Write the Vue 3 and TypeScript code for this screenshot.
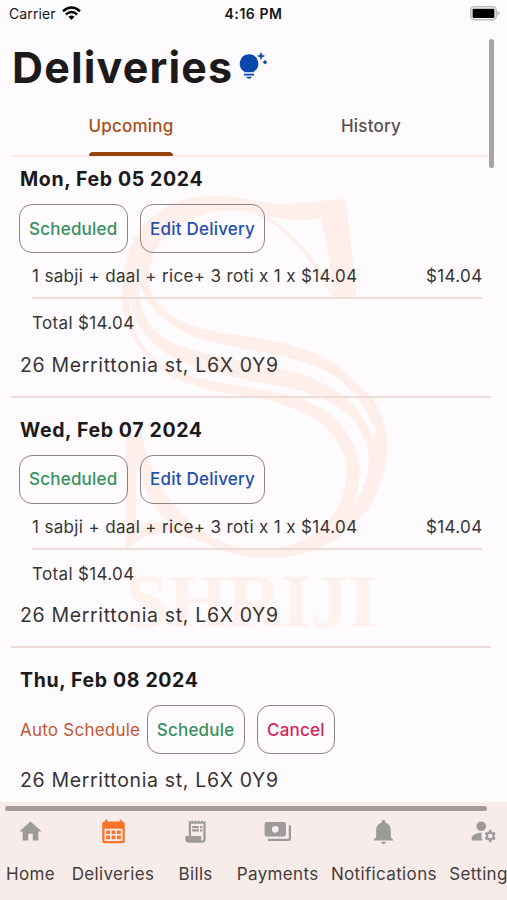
<script setup lang="ts">
interface Action {
  label: string
  tone: 'green' | 'blue' | 'red'
}
interface Delivery {
  date: string
  auto?: boolean
  actions: Action[]
  item?: string
  price?: string
  address: string
}
interface NavItem {
  label: string
  icon: string
  active?: boolean
}

const address = '26 Merrittonia st, L6X 0Y9'
const booked: Action[] = [
  { label: 'Scheduled', tone: 'green' },
  { label: 'Edit Delivery', tone: 'blue' },
]
const item = '1 sabji + daal + rice+ 3 roti x 1 x $14.04'

const deliveries: Delivery[] = [
  { date: 'Mon, Feb 05 2024', actions: booked, item, price: '$14.04', address },
  { date: 'Wed, Feb 07 2024', actions: booked, item, price: '$14.04', address },
  {
    date: 'Thu, Feb 08 2024',
    auto: true,
    actions: [
      { label: 'Schedule', tone: 'green' },
      { label: 'Cancel', tone: 'red' },
    ],
    address,
  },
]

const nav: NavItem[] = [
  { label: 'Home', icon: 'M10 20V14H14V20H19V12H22L12 3L2 12H5V20H10Z' },
  {
    label: 'Deliveries',
    active: true,
    icon: 'M4.500 1.500H6.500V3H17.500V1.500H19.500V3H20A2 2 0 0 1 22 5V20.500A2 2 0 0 1 20 22.500H4A2 2 0 0 1 2 20.500V5A2 2 0 0 1 4 3H4.500ZM4 9.500V20.500H20V9.500ZM5.500 11H8.900V14.200H5.500ZM10.300 11H13.700V14.200H10.300ZM15.100 11H18.500V14.200H15.100ZM5.500 15.600H8.900V18.800H5.500ZM10.300 15.600H13.700V18.800H10.300ZM15.100 15.600H18.500V18.800H15.100Z',
  },
  {
    label: 'Bills',
    icon: 'M19.500 3.500L18 2L16.500 3.500L15 2L13.500 3.500L12 2L10.500 3.500L9 2L7.500 3.500L6 2V16H3V19C3 20.660 4.340 22 6 22H18C19.660 22 21 20.660 21 19V2ZM19 19C19 19.550 18.550 20 18 20S17 19.550 17 19V16H8V5H19ZM9 7H15V9H9ZM16 7H18V9H16ZM9 10H15V12H9ZM16 10H18V12H16Z',
  },
  {
    label: 'Payments',
    icon: 'M2.500 3.500H17.500A2 2 0 0 1 19.500 5.500V14.500A2 2 0 0 1 17.500 16.500H2.500A2 2 0 0 1 .5 14.500V5.500A2 2 0 0 1 2.500 3.500ZM10 7A3 3 0 1 0 10 13A3 3 0 0 0 10 7ZM22 6.500H24V18.500A2 2 0 0 1 22 20.500H3.500V18.500H22Z',
  },
  {
    label: 'Notifications',
    icon: 'M20.500 19V20H3.500V19L5.500 17V11C5.500 7.900 7.030 5.170 10.300 4.290V3.500A1.700 1.700 0 0 1 13.700 3.500V4.290C16.970 5.170 18.500 7.900 18.500 11V17L20.500 19ZM14 21A2 2 0 0 1 10 21Z',
  },
  {
    label: 'Settings',
    icon: 'M10 3A4.300 4.300 0 1 1 10 11.600A4.300 4.300 0 0 1 10 3ZM10.670 13.020C7.800 12.900 1.500 14.200 1.500 18V20H11.500A7 7 0 0 1 10.670 13.020ZM21.750 16C21.750 15.780 21.720 15.580 21.690 15.370L22.830 14.360L21.830 12.330L20.380 12.920C20.060 12.650 19.700 12.440 19.300 12.290L19 10.500H17L16.700 12.290C16.300 12.440 15.940 12.650 15.620 12.920L14.170 12.330L13.170 14.360L14.310 15.370A4 4 0 0 0 14.310 16.630L13.170 17.640L14.170 19.670L15.620 19.080C15.940 19.350 16.300 19.560 16.700 19.710L17 21.500H19L19.300 19.710C19.700 19.560 20.060 19.350 20.380 19.080L21.830 19.670L22.830 17.640L21.690 16.630C21.720 16.420 21.750 16.220 21.750 16ZM18 14A2 2 0 1 1 18 18A2 2 0 0 1 18 14Z',
  },
]
</script>

<template>
  <div class="screen">
    <div class="watermark">
      <svg width="290" height="378" viewBox="0 0 870 1134" fill="#ffefea">
        <path d="M34 345C24 190 100 34 310 32C410 32 440 62 560 55C640 48 650 43 705 43L738 340H665C660 240 645 165 630 100C560 108 520 105 475 94C565 165 640 245 664 335C600 225 540 140 430 84C310 55 150 110 122 230C108 270 110 315 134 347C190 415 270 435 370 450C500 465 620 490 700 560C760 610 795 685 795 755C770 650 700 575 590 535C480 495 330 490 230 446C155 410 100 355 84 290C80 400 130 455 220 487C320 522 450 530 580 570C690 610 765 680 785 765C805 700 770 630 730 590C805 640 833 720 828 800C822 970 680 1115 480 1119C340 1120 270 1060 190 1044C130 1038 80 1060 45 1092V760L92 740C115 900 240 1084 440 1093C590 1097 705 1000 706 860C705 750 610 680 460 642C320 625 180 600 110 520C60 460 38 410 34 345ZM56 325C55 420 90 500 160 538C250 592 390 600 520 628C650 655 740 740 746 860C745 910 735 940 720 965C775 900 785 830 760 760C730 680 650 640 560 615C440 585 300 578 190 520C110 480 65 410 56 325ZM75 830V1018C115 1006 150 1010 185 1022C125 975 95 910 75 830Z" fill-rule="evenodd" />
      </svg>
      <div class="brand">SHRIJI</div>
    </div>

    <div class="status">
      <div class="carrier">
        <span>Carrier</span>
        <svg width="19" height="15" viewBox="0 0 19 15" fill="none" stroke="#000">
          <path d="M1 5.200Q9.500 -2.300 18 5.200" stroke-width="2.500" />
          <path d="M3.900 8.500Q9.500 3.500 15.100 8.500" stroke-width="2.400" />
          <path d="M6.400 10.700Q9.500 8.300 12.600 10.700L9.500 13.900Z" fill="#000" stroke="none" />
        </svg>
      </div>
      <span class="clock">4:16 PM</span>
      <svg class="battery" width="30" height="15" viewBox="0 0 30 15">
        <rect x=".8" y=".8" width="25.400" height="13" rx="3.500" fill="#fff" stroke="#bbb" stroke-width="1.500" />
        <rect x="2.600" y="2.700" width="21.800" height="9.200" rx="1" />
        <path d="M27.300 4.800L30 7.300L27.300 9.800Z" fill="#bbb" />
      </svg>
    </div>

    <header class="heading">
      <h1>Deliveries</h1>
      <svg width="29" height="29" viewBox="0 0 29 29" fill="#0b47ac">
        <path d="M10 3.300A9.300 9.300 0 0 1 14.800 20.500V21.200H5.200V20.500A9.300 9.300 0 0 1 10 3.300ZM5 22.700H15V24.400H5ZM6.900 25.800H13.100Q10 29.600 6.900 25.800Z" />
        <path d="M22 1.500L23 4L25.500 5L23 6L22 8.500L21 6L18.500 5L21 4ZM26 9.200L28 11.200L26 13.200L24 11.200Z" stroke="#0b47ac" stroke-width=".5" />
      </svg>
    </header>

    <nav class="tabs">
      <div class="tab selected"><span>Upcoming</span></div>
      <div class="tab"><span>History</span></div>
    </nav>

    <main class="list">
      <section v-for="d in deliveries" :key="d.date" class="delivery">
        <h2>{{ d.date }}</h2>
        <div class="actions">
          <span v-if="d.auto" class="auto">Auto Schedule</span>
          <button v-for="a in d.actions" :key="a.label" :class="a.tone">{{ a.label }}</button>
        </div>
        <div v-if="d.item" class="order">
          <div class="line"><span>{{ d.item }}</span><span class="price">{{ d.price }}</span></div>
          <div class="total">Total {{ d.price }}</div>
        </div>
        <p class="address">{{ d.address }}</p>
      </section>
    </main>

    <footer class="bottom">
      <div v-for="n in nav" :key="n.label" class="nav" :class="{ active: n.active }">
        <svg width="27" height="27" viewBox="0 0 24 24" fill="currentColor" fill-rule="evenodd">
          <path :d="n.icon" />
        </svg>
        <span>{{ n.label }}</span>
      </div>
    </footer>

    <div class="scroll-y"></div>
    <div class="scroll-x"></div>
  </div>
</template>

<style>
body {
  margin: 0;
  overflow: hidden;
}
</style>

<style scoped>
.screen {
  position: relative;
  display: flex;
  flex-direction: column;
  width: 507px;
  height: 900px;
  overflow: hidden;
  background: #fdfbfe;
  color: #373435;
  font-family: Inter, 'Liberation Sans', sans-serif;
}
.watermark {
  position: absolute;
  left: 111px;
  top: 185px;
  width: 290px;
}
.watermark svg {
  display: block;
}
.brand {
  margin: 0 0 0 15px;
  color: #fff1ed;
  font: bold 77px/77px 'Liberation Serif', serif;
  letter-spacing: -1px;
  white-space: nowrap;
}
.status {
  position: relative;
  display: grid;
  grid-template-columns: 1fr auto 1fr;
  align-items: center;
  height: 28px;
  padding: 0 7px 0 9px;
  box-sizing: border-box;
  color: #161616;
  font-size: 14px;
}
.carrier {
  display: flex;
  align-items: center;
  gap: 6px;
  margin-bottom: 2px;
  letter-spacing: 0.1px;
}
.clock {
  margin: 0 2px 2px 0;
  font-weight: 600;
  letter-spacing: 0.55px;
}
.battery {
  justify-self: end;
  margin-bottom: 2px;
}
.heading {
  position: relative;
  display: flex;
  align-items: center;
  gap: 6px;
  height: 78px;
  padding-left: 12px;
}
h1 {
  margin: 0;
  color: #1c1a1b;
  font-size: 43px;
  font-weight: 700;
  letter-spacing: 1.15px;
}
.heading svg {
  margin-bottom: 3px;
}
.tabs {
  position: relative;
  display: flex;
  height: 49px;
  margin: 0 16px 0 11px;
  border-bottom: 2px solid #fcebe6;
}
.tab {
  flex: 1;
  display: flex;
  justify-content: center;
  color: #56504e;
  font-size: 17px;
  font-weight: 500;
  line-height: 40px;
  letter-spacing: 0.2px;
}
.tab span {
  display: flex;
  flex-direction: column;
  justify-content: space-between;
  height: 50px;
}
.tab.selected {
  color: #a95014;
}
.tab.selected span::after {
  content: '';
  height: 4px;
  border-radius: 4px 4px 0 0;
  background: #98420b;
}
.list {
  position: relative;
  flex: 1;
  min-height: 0;
  overflow: hidden;
  padding: 0 16px 0 11px;
}
.delivery {
  padding: 19px 9px 11px 9px;
  border-bottom: 2px solid #eeddd7;
  font-size: 17px;
}
.delivery:first-child {
  padding-top: 9px;
}
h2 {
  margin: 0;
  color: #1b191a;
  font-size: 19.500px;
  font-weight: 700;
  line-height: 26px;
  letter-spacing: 0.64px;
}
.actions {
  display: flex;
  align-items: center;
  gap: 12.500px;
  height: 49px;
  margin: 12px 0 0 -1px;
}
.auto {
  margin-right: -6px;
  padding-left: 1px;
  color: #c45635;
  letter-spacing: 0.23px;
}
button {
  height: 49px;
  padding: 0 9px;
  border: 1px solid #8b8583;
  border-radius: 13px;
  background: transparent;
  font: 500 17px Inter, 'Liberation Sans', sans-serif;
  letter-spacing: 0.22px;
}
.green {
  color: #38915e;
}
.blue {
  color: #1f50ae;
}
.red {
  color: #d5265a;
}
.order {
  margin: 0 0 -5.500px 12px;
  letter-spacing: 0.35px;
}
.line {
  display: flex;
  justify-content: space-between;
  height: 44px;
  line-height: 47px;
  border-bottom: 2px solid #eeddd7;
}
.price {
  margin-right: -0.500px;
}
.total {
  height: 45px;
  line-height: 48px;
}
.address {
  margin: 0;
  padding-top: 6px;
  font-size: 19.500px;
  line-height: 40px;
  letter-spacing: 0.66px;
}
.bottom {
  position: relative;
  display: flex;
  height: 98px;
  padding-top: 16px;
  box-sizing: border-box;
  background: #f8eceb;
  color: #433c3c;
  font-size: 17px;
  letter-spacing: 0.35px;
}
.nav {
  flex: none;
  display: flex;
  flex-direction: column;
  align-items: center;
  gap: 18px;
  min-width: 70px;
  padding: 0 6.200px;
  box-sizing: border-box;
}
.nav:first-child {
  margin-left: -4.500px;
}
.nav svg {
  color: #9d9a9a;
}
.nav.active svg {
  color: #f9742a;
}
.nav span {
  line-height: 22px;
}
.scroll-y {
  position: absolute;
  top: 39px;
  right: 13px;
  width: 5px;
  height: 129px;
  border-radius: 3px;
  background: #a5a3a6;
}
.scroll-x {
  position: absolute;
  left: 5px;
  bottom: 89px;
  width: 482px;
  height: 5px;
  border-radius: 3px;
  background: #a39a9a;
}
</style>
